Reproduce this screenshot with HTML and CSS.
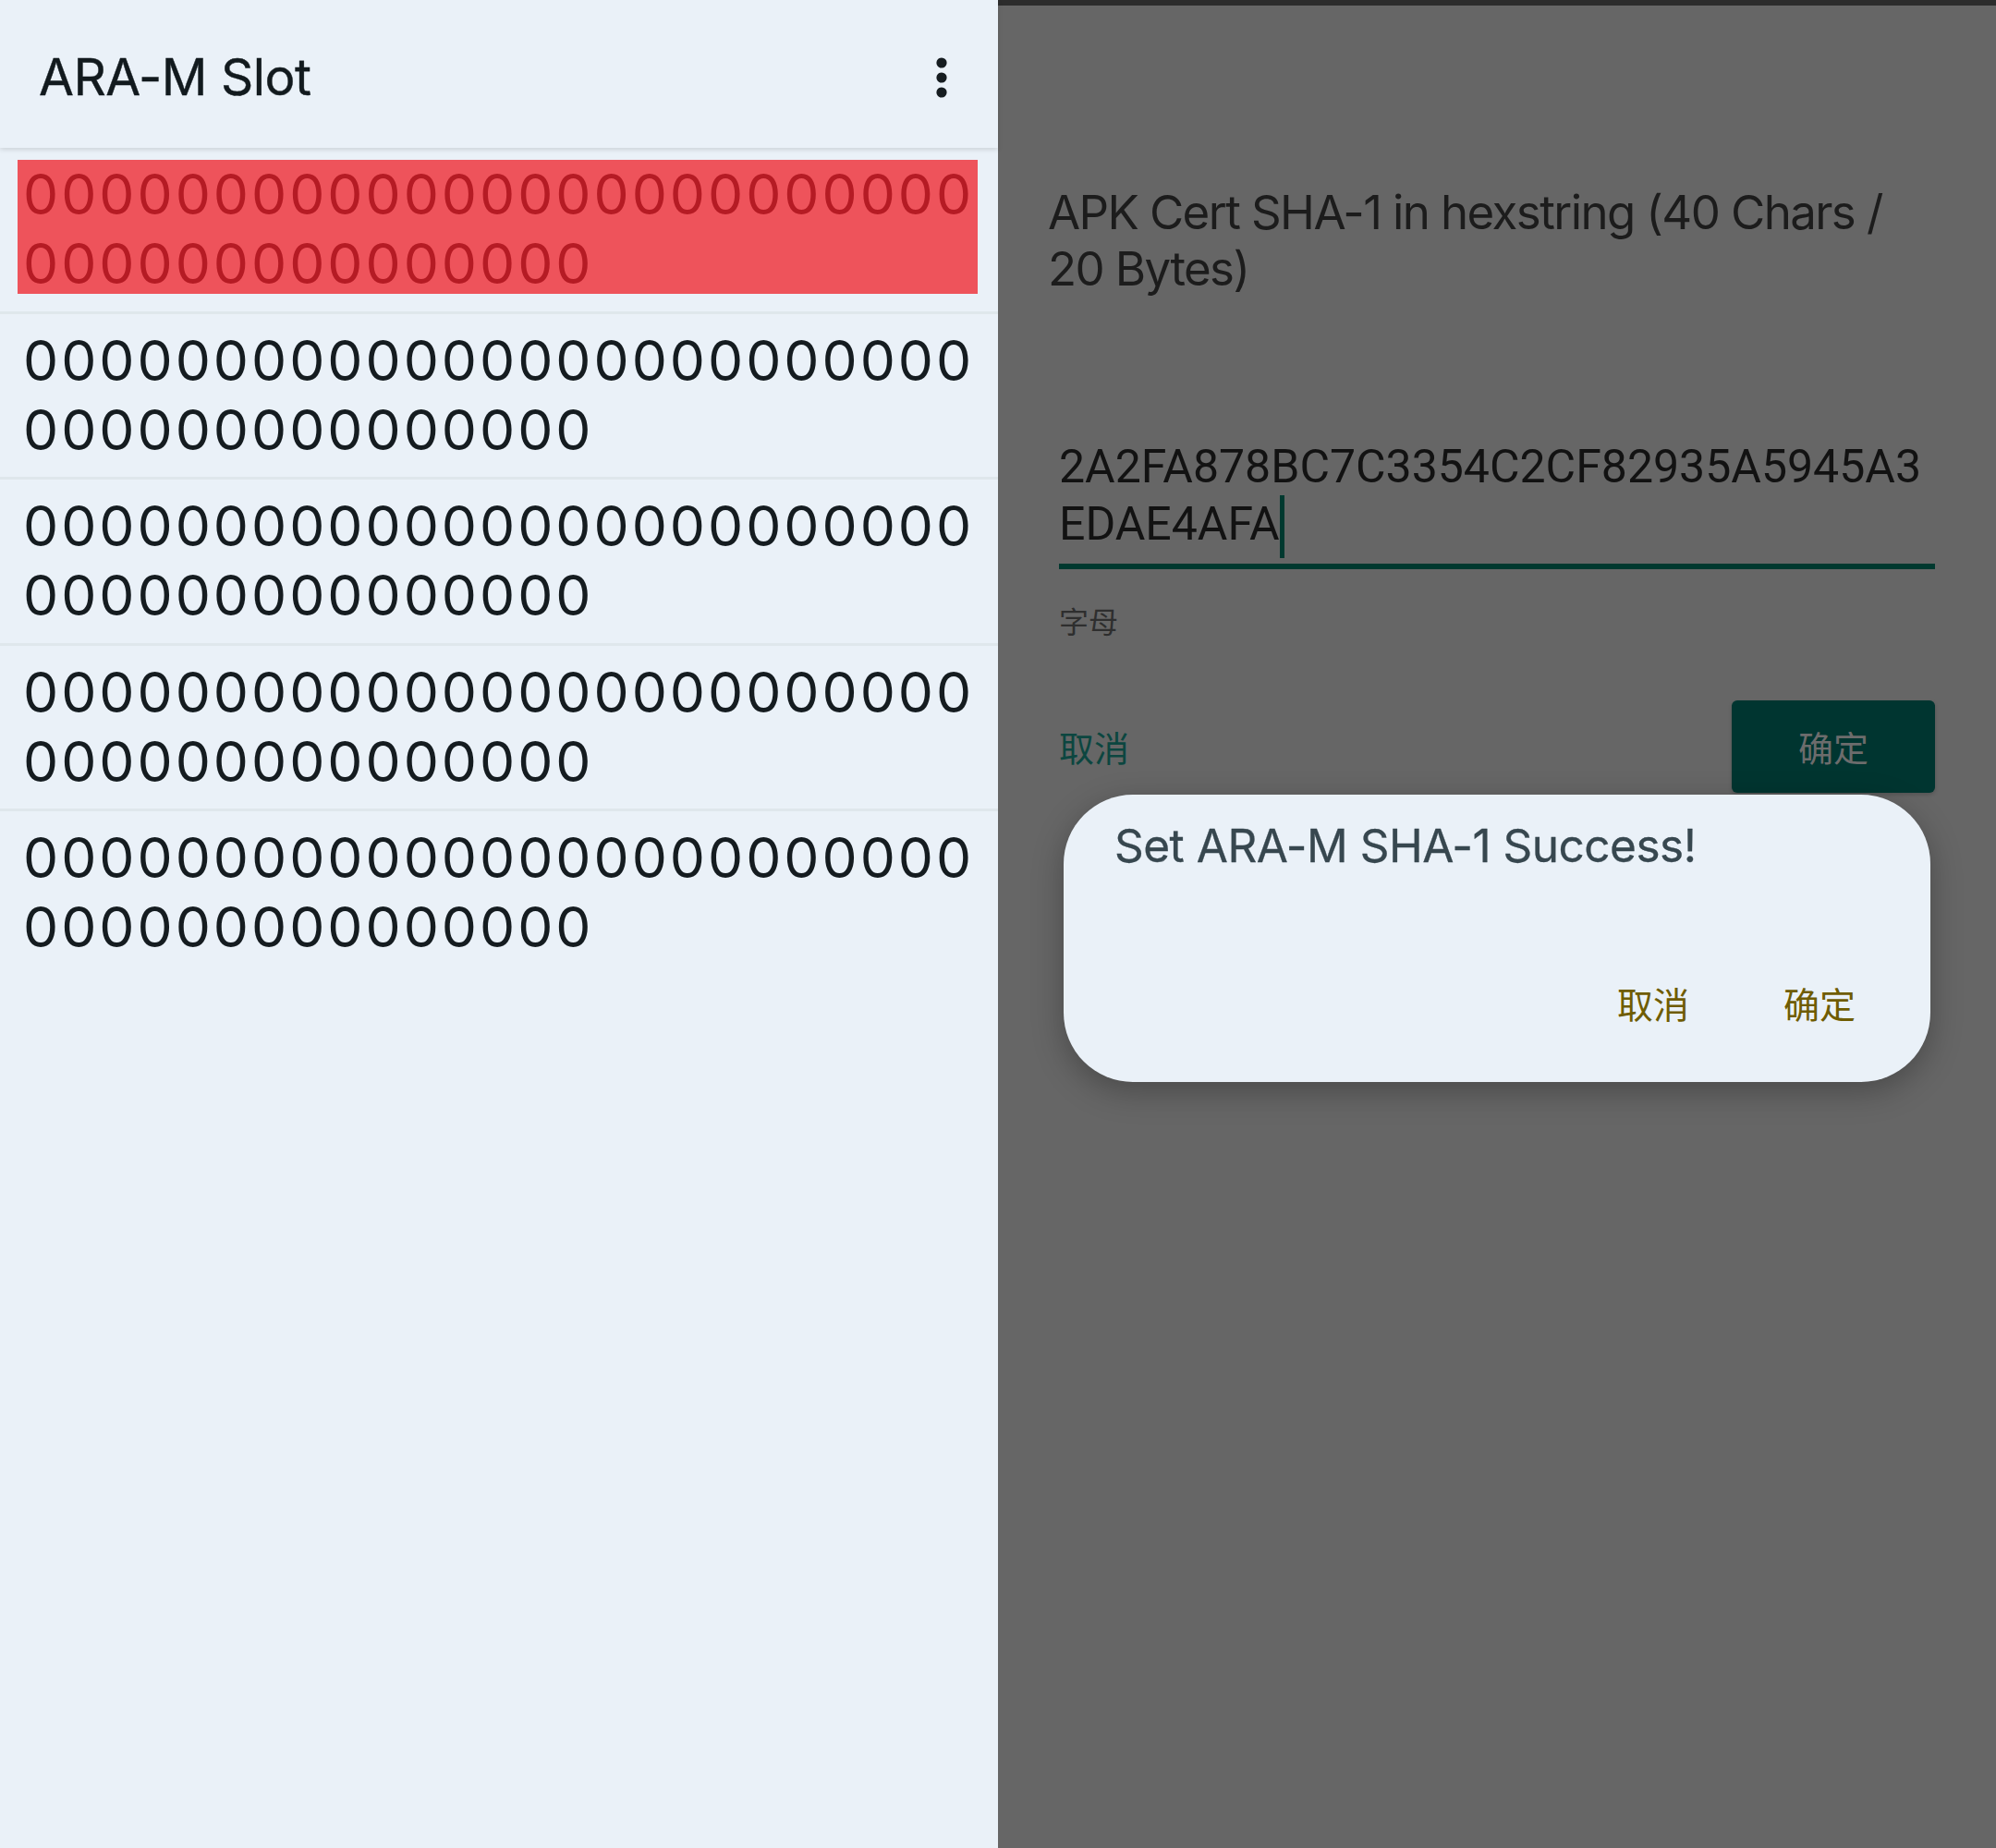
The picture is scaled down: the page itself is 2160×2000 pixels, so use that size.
FILE: index.html
```html
<!DOCTYPE html>
<html lang="zh-CN">
<head>
<meta charset="utf-8">
<title>ARA-M Slot</title>
<link rel="stylesheet" href="styles.css">
</head>
<body>
<div class="screen">
  <section class="pane pane-list">
    <header class="appbar">
      <h1 class="appbar-title">ARA-M Slot</h1>
      <button class="menu-btn" aria-label="More options">
        <svg width="12" height="44" viewBox="0 0 12 44"><circle cx="6" cy="6" r="5.6"/><circle cx="6" cy="22" r="5.6"/><circle cx="6" cy="38" r="5.6"/></svg>
      </button>
    </header>
    <ul class="slot-list">
      <li class="slot-item"><div class="slot slot-selected">0000000000000000000000000000000000000000</div></li>
      <li class="slot-item"><div class="slot">0000000000000000000000000000000000000000</div></li>
      <li class="slot-item"><div class="slot">0000000000000000000000000000000000000000</div></li>
      <li class="slot-item"><div class="slot">0000000000000000000000000000000000000000</div></li>
      <li class="slot-item"><div class="slot">0000000000000000000000000000000000000000</div></li>
    </ul>
  </section>

  <section class="pane pane-dialog">
    <p class="field-label">APK Cert SHA-1 in hexstring (40 Chars /<br>20 Bytes)</p>
    <div class="field">
      <div class="field-input">2A2FA878BC7C3354C2CF82935A5945A3EDAE4AFA<span class="caret"></span></div>
    </div>
    <div class="field-helper">字母</div>
    <div class="actions">
      <button class="btn-text">取消</button>
      <button class="btn-filled">确定</button>
    </div>

    <div class="alert">
      <h2 class="alert-title">Set ARA-M SHA-1 Success!</h2>
      <div class="alert-actions">
        <button class="alert-btn">取消</button>
        <button class="alert-btn">确定</button>
      </div>
    </div>
  </section>
</div>
</body>
</html>
```

FILE: styles.css
```css
* { box-sizing: border-box; }

html, body {
  margin: 0;
  padding: 0;
  width: 2160px;
  height: 2000px;
  overflow: hidden;
}

body {
  font-family: "Inter", "Noto Sans CJK SC", sans-serif;
}

.screen {
  display: flex;
  width: 2160px;
  height: 2000px;
}

.pane {
  width: 1080px;
  height: 2000px;
}

/* ---------- left pane ---------- */
.pane-list {
  background: #eaf1f8;
  display: flex;
  flex-direction: column;
}

.appbar {
  height: 160px;
  flex: none;
  display: flex;
  align-items: center;
  justify-content: space-between;
  padding: 6px 55px 0 42px;
  background: #eaf1f8;
  box-shadow: 0 2px 5px rgba(0, 0, 0, 0.13);
  position: relative;
  z-index: 1;
}

.appbar-title {
  margin: 0;
  font-family: "Inter", sans-serif;
  font-weight: 400;
  font-size: 55px;
  color: #121a1e;
  letter-spacing: -0.5px;
  -webkit-text-stroke: 0.4px #121a1e;
}

.menu-btn {
  border: 0;
  padding: 0;
  background: none;
  margin-top: 2px;
  display: flex;
}

.menu-btn svg { fill: #151c20; }

.slot-list {
  list-style: none;
  margin: 0;
  padding: 0;
}

.slot-item {
  height: 179.5px;
  padding: 13px 22px 0 19px;
  border-bottom: 3px solid #dfe7ec;
}

.slot-item:last-child { border-bottom: 0; }

.slot {
  height: 145px;
  padding-left: 6px;
  font-family: "Inter", sans-serif;
  font-size: 60.5px;
  line-height: 75px;
  letter-spacing: 3px;
  color: #151c20;
  word-break: break-all;
}

.slot-selected {
  background: #ee535b;
  color: #b51b24;
}

/* ---------- right pane ---------- */
.pane-dialog {
  position: relative;
  background: #666666;
  border-top: 6px solid #2c2c2c;
  display: flex;
  flex-direction: column;
  padding: 0 66px;
}

.field-label {
  margin: 193px 0 0 -12px;
  font-family: "Inter", sans-serif;
  font-size: 51px;
  line-height: 61px;
  color: #1c1c1c;
  letter-spacing: -1.6px;
}

.field {
  margin-top: 153px;
  padding-bottom: 12px;
  border-bottom: 6px solid #00392f;
}

.field-input {
  font-family: "Roboto", sans-serif;
  font-size: 50px;
  line-height: 62px;
  color: #121212;
  word-break: break-all;
}

.caret {
  display: inline-block;
  width: 5px;
  height: 68px;
  margin-bottom: -6px;
  vertical-align: top;
  background: #00392f;
}

.field-helper {
  margin-top: 39px;
  font-family: "Noto Sans CJK SC", sans-serif;
  font-size: 32px;
  line-height: 32px;
  color: #2e2e2e;
}

.actions {
  margin-top: 71px;
  display: flex;
  align-items: center;
  justify-content: space-between;
}

.btn-text,
.btn-filled,
.alert-btn {
  border: 0;
  padding: 0;
  background: none;
  font-family: "Noto Sans CJK SC", sans-serif;
  font-size: 38px;
  line-height: 38px;
}

.btn-text { color: #0c4640; }

.btn-filled {
  width: 220px;
  height: 100px;
  border-radius: 6px;
  background: #003530;
  color: #6c6c6c;
  box-shadow: 0 2px 4px rgba(0, 0, 0, 0.18);
}

.alert {
  position: absolute;
  left: 71px;
  top: 854px;
  width: 938px;
  height: 311px;
  border-radius: 75px;
  background: #eaf1f8;
  box-shadow: 0 10px 34px rgba(0, 0, 0, 0.28);
  padding: 25px 81px 0 55px;
  display: flex;
  flex-direction: column;
}

.alert-title {
  margin: 0;
  font-family: "Inter", sans-serif;
  font-weight: 400;
  font-size: 49.5px;
  line-height: 60px;
  color: #37474f;
  letter-spacing: -0.5px;
  -webkit-text-stroke: 0.3px #37474f;
}

.alert-actions {
  margin-top: 121px;
  display: flex;
  justify-content: flex-end;
  gap: 102px;
}

.alert-btn {
  color: #6f5c00;
  font-size: 39px;
}
```
